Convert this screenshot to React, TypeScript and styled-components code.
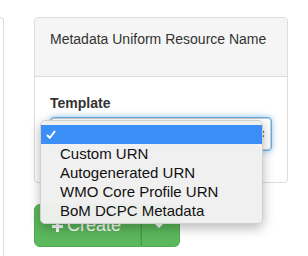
import React from 'react';
import styled, { createGlobalStyle } from 'styled-components';

const templates = ['Custom URN', 'Autogenerated URN', 'WMO Core Profile URN', 'BoM DCPC Metadata'];

const App: React.FC = () => {
  return (
    <>
      <GlobalStyle />
      <Page>
        <SidePanel />
        <Column>
          <Panel>
            <PanelHeading>Metadata Uniform Resource Name</PanelHeading>
            <PanelBody>
              <Label>Template</Label>
              <Select>
                <SelectArrows width="8" height="12" viewBox="0 0 8 12">
                  <path d="M1 4.5 L4 1.5 L7 4.5" fill="none" stroke="#555" strokeWidth="1.4" />
                  <path d="M1 7.5 L4 10.5 L7 7.5" fill="none" stroke="#555" strokeWidth="1.4" />
                </SelectArrows>
              </Select>
            </PanelBody>
          </Panel>
          <ButtonGroup>
            <MainButton>
              <PlusIcon width="11" height="11" viewBox="0 0 11 11">
                <path d="M4 0h3v4h4v3H7v4H4V7H0V4h4z" fill="#fff" />
              </PlusIcon>
              Create
            </MainButton>
            <CaretButton>
              <Caret />
            </CaretButton>
          </ButtonGroup>
        </Column>
      </Page>
      <Menu>
        <MenuItem $selected>
          <Check width="10" height="9" viewBox="0 0 10 9">
            <path d="M1 5 L3.8 7.8 L9 1" fill="none" stroke="#fff" strokeWidth="2" />
          </Check>
        </MenuItem>
        {templates.map((t) => (
          <MenuItem key={t}>{t}</MenuItem>
        ))}
      </Menu>
    </>
  );
};

export default App;

const GlobalStyle = createGlobalStyle`
  html, body {
    margin: 0;
    padding: 0;
    background: #fff;
    width: 308px;
    height: 256px;
    overflow: hidden;
    font-family: "Helvetica Neue", "Liberation Sans", Arial, sans-serif;
    color: #333;
  }
`;

const Page = styled.div`
  display: flex;
  gap: 30px;
  height: 256px;
  padding-top: 17px;
  box-sizing: border-box;
`;

const SidePanel = styled.div`
  width: 3px;
  border: 1px solid #ddd;
  border-left: none;
  border-bottom: none;
  border-top-right-radius: 4px;
`;

const Column = styled.div`
  width: 254px;
  display: flex;
  flex-direction: column;
`;

const Panel = styled.div`
  border: 1px solid #ddd;
  border-radius: 4px;
  overflow: hidden;
`;

const PanelHeading = styled.div`
  height: 59px;
  box-sizing: border-box;
  padding: 11px 15px;
  background: #f5f5f5;
  border-bottom: 1px solid #ddd;
  font-size: 14px;
  line-height: 20px;
`;

const PanelBody = styled.div`
  padding: 16px 15px 31px;
  display: flex;
  flex-direction: column;
`;

const Label = styled.div`
  font-weight: bold;
  font-size: 14px;
  line-height: 20px;
  margin-bottom: 4px;
`;

const Select = styled.div`
  height: 34px;
  box-sizing: border-box;
  border: 1px solid #66afe9;
  border-radius: 4px;
  background: #fff;
  box-shadow: inset 0 0 0 1px #ccc, 0 0 6px rgba(102, 175, 233, 0.7);
  display: flex;
  align-items: center;
  justify-content: flex-end;
  padding-right: 6px;
`;

const SelectArrows = styled.svg`
  display: block;
`;

const ButtonGroup = styled.div`
  display: flex;
  margin-top: 21px;
  width: 146px;
  height: 43px;
`;

const MainButton = styled.div`
  width: 107px;
  box-sizing: border-box;
  background: #5cb85c;
  border: 1px solid #4cae4c;
  border-radius: 6px 0 0 6px;
  color: #fff;
  font-size: 18px;
  display: flex;
  align-items: center;
  padding-left: 17px;
  gap: 4px;
`;

const PlusIcon = styled.svg`
  display: block;
  margin-top: 1px;
`;

const CaretButton = styled.div`
  flex: 1;
  background: #5cb85c;
  border: 1px solid #4cae4c;
  border-left-color: #449d44;
  border-radius: 0 6px 6px 0;
  display: flex;
  align-items: center;
  justify-content: center;
  padding-right: 4px;
`;

const Caret = styled.div`
  width: 0;
  height: 0;
  border-left: 5px solid transparent;
  border-right: 5px solid transparent;
  border-top: 5px solid #fff;
`;

const Menu = styled.div`
  position: absolute;
  left: 40px;
  top: 120px;
  width: 223px;
  padding: 4px 0 3px;
  background: rgba(239, 239, 239, 0.97);
  border: 1px solid #cfcfcf;
  border-radius: 5px;
  box-shadow: 0 4px 12px rgba(0, 0, 0, 0.28);
  box-sizing: border-box;
`;

const MenuItem = styled.div<{ $selected?: boolean }>`
  height: 19px;
  display: flex;
  align-items: center;
  padding-left: 19px;
  font-size: 15px;
  color: #111;
  background: ${(p) => (p.$selected ? '#3b8ef6' : 'transparent')};
`;

const Check = styled.svg`
  display: block;
  margin-left: -14px;
`;
